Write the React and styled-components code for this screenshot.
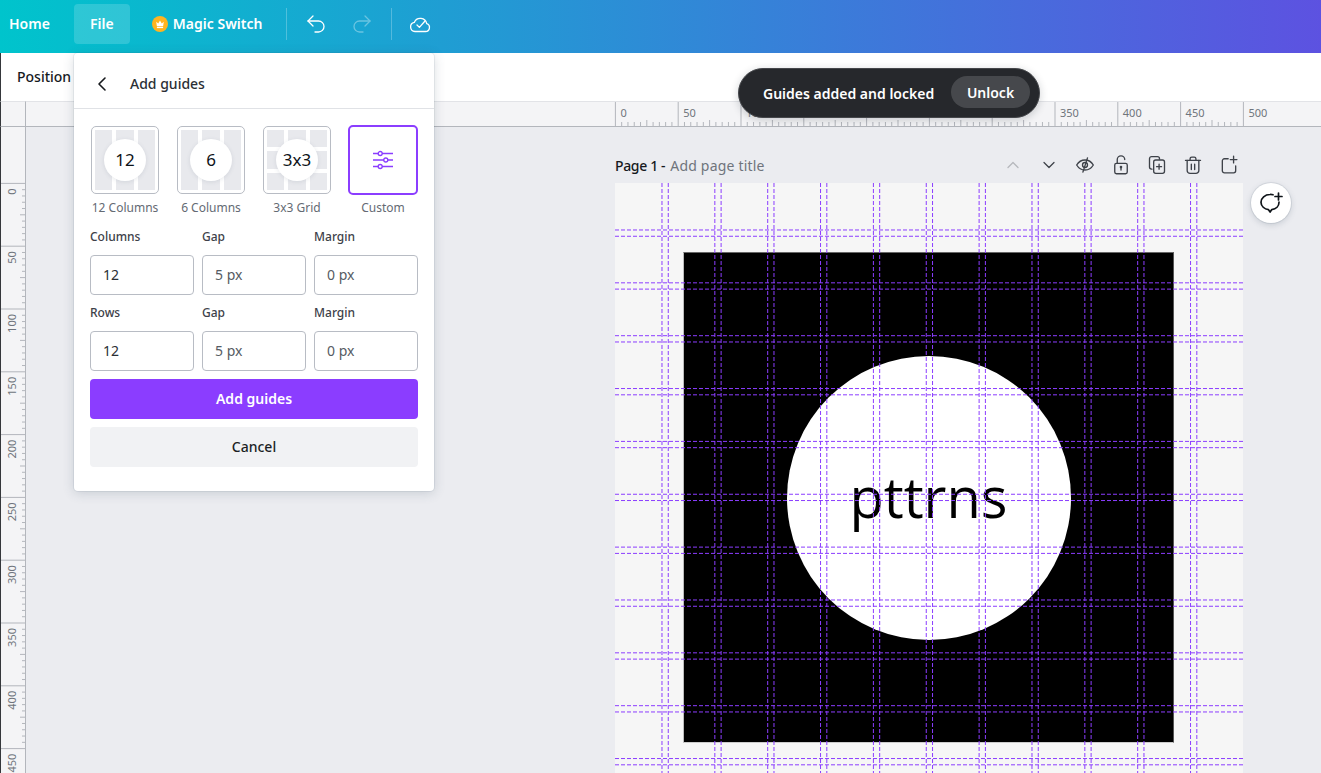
import React from "react";
import styled, { createGlobalStyle } from "styled-components";
import { Undo2, Redo2, ChevronLeft, ChevronUp, ChevronDown } from "lucide-react";

const SANS = `"Noto Sans", "Open Sans", sans-serif`;
const SCALE = 628 / 500;
const GAP = 5 * SCALE;
const COL = (628 - 11 * GAP) / 12;

const GlobalStyle = createGlobalStyle`
  html, body {
    margin: 0;
    height: 100%;
    overflow: hidden;
    font-family: ${SANS};
    background: #ebecf0;
  }
  * { box-sizing: border-box; }
`;

const Shell = styled.div`
  position: relative;
  width: 100%;
  height: 100vh;
  display: flex;
  flex-flow: column;
  overflow: hidden;
`;

const TopBar = styled.header`
  height: 53px;
  flex: none;
  display: flex;
  align-items: center;
  padding: 0 0 5px 9px;
  color: #fff;
  background: linear-gradient(90deg, #00c4cc 0, #7d2ae8 135%);
`;
const BarText = styled.span`
  padding-bottom: 1px;
  font-size: 14px;
  font-weight: 600;
`;
const FileButton = styled.div`
  width: 56px;
  height: 40px;
  margin: 0 22px 0 24px;
  padding-bottom: 1px;
  display: flex;
  justify-content: center;
  align-items: center;
  font-size: 14px;
  font-weight: 600;
  border-radius: 4px;
  background: rgba(255, 255, 255, 0.16);
`;
const Magic = styled.div`
  display: flex;
  align-items: center;
  gap: 5px;
`;
const BarDivider = styled.div`
  width: 1px;
  height: 32px;
  margin: ${(p) => p.$margin};
  background: rgba(255, 255, 255, 0.25);
`;
const BarIcon = styled.div`
  width: 24px;
  height: 24px;
  margin-right: ${(p) => p.$after || 0}px;
  display: flex;
  justify-content: center;
  align-items: center;
  opacity: ${(p) => (p.$dim ? 0.35 : 1)};
`;

const ContextBar = styled.div`
  height: 48px;
  flex: none;
  padding: 0 0 1px 16px;
  display: flex;
  align-items: center;
  border-left: 1px solid #35373b;
  background: #fff;
  font-size: 14px;
  font-weight: 500;
  color: #16191d;
`;

const Workspace = styled.div`
  flex: 1;
  min-height: 0;
  display: grid;
  grid-template-columns: 26px 1fr;
  grid-template-rows: 26px 1fr;
`;
const RulerCorner = styled.div`
  border-left: 1px solid #35373b;
  border-top: 1px solid #e2e3e7;
  border-right: 1px solid #b3b6bc;
  border-bottom: 1px solid #b3b6bc;
  background: #f4f4f6;
`;
const RulerTop = styled.div`
  padding-left: 589px;
  border-top: 1px solid #e2e3e7;
  border-bottom: 1px solid #b3b6bc;
  background: #f4f4f6;
  overflow: hidden;
`;
const RulerLeft = styled.div`
  padding-top: 56px;
  border-left: 1px solid #35373b;
  border-right: 1px solid #b3b6bc;
  background: #f4f4f6;
  overflow: hidden;
`;
const RulerSvg = styled.svg`
  display: block;
  overflow: visible;
`;
const RulerLabel = styled.text`
  font-family: ${SANS};
  font-size: 11px;
  fill: #6f747c;
`;

const Canvas = styled.main`
  padding: 22px 0 0 589px;
  overflow: hidden;
  background: #ebecf0;
`;
const PageColumn = styled.div`
  width: 628px;
`;
const PageHeader = styled.div`
  height: 34px;
  padding-bottom: 2px;
  display: flex;
  align-items: center;
  font-size: 14px;
  color: #16191d;
`;
const PageName = styled.span`
  font-weight: 500;
  letter-spacing: -0.35px;
`;
const PageHint = styled.span`
  margin-left: 5px;
  letter-spacing: 0.2px;
  color: #6f747c;
`;
const PageTools = styled.div`
  margin: 0 -4px 0 auto;
  display: flex;
`;
const PageTool = styled.div`
  width: 36px;
  height: 24px;
  display: flex;
  justify-content: center;
  align-items: center;
  color: #3e4249;
  opacity: ${(p) => (p.$dim ? 0.3 : 1)};
`;
const PageRow = styled.div`
  display: flex;
  gap: 8px;
  width: 676px;
`;
const Page = styled.section`
  position: relative;
  flex: none;
  width: 628px;
  height: 628px;
  display: flex;
  justify-content: center;
  align-items: center;
  background: #f6f6f6;
`;
const BlackSquare = styled.div`
  width: 491px;
  height: 491px;
  margin: 1px 1px 0 0;
  display: flex;
  justify-content: center;
  align-items: center;
  background: #000;
  border-style: solid;
  border-width: 1px;
  border-color: #666 #555 #ccc #bbb;
`;
const Disc = styled.div`
  width: 284px;
  height: 284px;
  padding-bottom: 3px;
  display: flex;
  justify-content: center;
  align-items: center;
  border-radius: 50%;
  background: #fff;
`;
const Logo = styled.div`
  font-family: "Open Sans", sans-serif;
  font-size: 56px;
  line-height: 1;
  color: #000;
`;
const GuideLayer = styled.svg`
  position: absolute;
  left: 0;
  top: 0;
  width: 628px;
  height: 628px;
  pointer-events: none;
`;
const CommentButton = styled.button`
  width: 40px;
  height: 40px;
  flex: none;
  padding: 0;
  display: flex;
  justify-content: center;
  align-items: center;
  border: 0;
  border-radius: 50%;
  background: #fff;
  box-shadow: 0 0 0 1px rgba(57, 76, 96, 0.1), 0 2px 6px rgba(57, 76, 96, 0.2);
`;

const Toast = styled.div`
  position: absolute;
  left: 738px;
  top: 68px;
  width: 302px;
  height: 50px;
  padding: 0 9px 0 24px;
  display: flex;
  justify-content: space-between;
  align-items: center;
  border: 1px solid #45474b;
  border-radius: 25px;
  background: #26282c;
  box-shadow: 0 2px 8px rgba(20, 30, 40, 0.2);
  color: #fff;
  font-size: 14px;
  font-weight: 600;
`;
const UnlockButton = styled.div`
  width: 79px;
  height: 32px;
  margin-top: -2px;
  display: flex;
  justify-content: center;
  align-items: center;
  border-radius: 16px;
  background: #46484c;
`;

const Panel = styled.aside`
  position: absolute;
  left: 74px;
  top: 53px;
  width: 360px;
  height: 438px;
  border-radius: 4px;
  background: #fff;
  box-shadow: 0 0 0 1px rgba(57, 76, 96, 0.08), 0 2px 12px rgba(57, 76, 96, 0.2);
`;
const PanelHeader = styled.div`
  height: 56px;
  padding: 6px 0 0 16px;
  display: flex;
  align-items: center;
  gap: 16px;
  border-bottom: 1px solid #e0e2e6;
  font-size: 14px;
  font-weight: 500;
  color: #2b2f35;
`;
const PanelBody = styled.div`
  padding: 16px 16px 0;
`;
const Presets = styled.div`
  display: grid;
  grid-template-columns: repeat(4, 70px);
  justify-content: space-between;
  margin-bottom: 10px;
`;
const Preset = styled.div`
  display: flex;
  flex-flow: column;
  align-items: center;
  gap: 4px;
`;
const Tile = styled.div`
  position: relative;
  width: ${(p) => (p.$active ? 70 : 68)}px;
  height: ${(p) => (p.$active ? 70 : 68)}px;
  margin-top: ${(p) => (p.$active ? 0 : 1)}px;
  margin-bottom: ${(p) => (p.$active ? 0 : 1)}px;
  padding: 3px;
  display: flex;
  justify-content: center;
  align-items: center;
  border: ${(p) => (p.$active ? "2px solid #8b3dff" : "1px solid #b8bcc4")};
  border-radius: 5px;
  background: #fff;
  color: #8b3dff;
`;
const TileGrid = styled.div`
  width: 100%;
  height: 100%;
  display: grid;
  grid-template-columns: repeat(3, 1fr);
  grid-template-rows: repeat(${(p) => p.$rows}, 1fr);
  gap: 4px;
`;
const TileCell = styled.div`
  background: #e8e9ed;
`;
const TileBadge = styled.div`
  position: absolute;
  left: 50%;
  top: 50%;
  width: 42px;
  height: 42px;
  padding-bottom: 1px;
  display: flex;
  justify-content: center;
  align-items: center;
  transform: translate(-50%, -50%);
  border-radius: 50%;
  background: #fff;
  box-shadow: 0 1px 4px rgba(57, 76, 96, 0.12);
  font-size: 17px;
  color: #0e1318;
`;
const PresetLabel = styled.div`
  font-size: 12px;
  line-height: 18px;
  color: #646a73;
`;
const FieldGrid = styled.div`
  display: grid;
  grid-template-columns: repeat(3, 104px);
  column-gap: 8px;
  margin-bottom: 8px;
`;
const FieldLabel = styled.div`
  height: 28px;
  font-size: 12px;
  font-weight: 500;
  line-height: 20px;
  color: #3d4149;
`;
const Field = styled.div`
  height: 40px;
  padding: 0 0 1px 12px;
  display: flex;
  align-items: center;
  border: 1px solid #b8bcc4;
  border-radius: 4px;
  background: #fff;
  font-size: 14px;
  color: ${(p) => (p.$unit ? "#565b63" : "#2b2f35")};
`;
const Action = styled.div`
  height: 40px;
  margin-bottom: 8px;
  padding-bottom: 1px;
  display: flex;
  justify-content: center;
  align-items: center;
  border-radius: 4px;
  font-size: 14px;
  font-weight: ${(p) => (p.$primary ? 600 : 500)};
  color: ${(p) => (p.$primary ? "#fff" : "#1c1f24")};
  background: ${(p) => (p.$primary ? "#8b3dff" : "#f1f2f4")};
`;

function Crown() {
  return (
    <svg width="16" height="16" viewBox="0 0 16 16">
      <circle cx="8" cy="8" r="8" fill="#ffb420" />
      <path d="M4.200 5.800l2 1.600L8 4.600l1.800 2.800 2-1.600-.7 4.400H4.900z" fill="#fff" />
      <rect x="4.900" y="10.900" width="6.200" height="1.200" fill="#fff" />
    </svg>
  );
}

function CloudCheck() {
  return (
    <svg width="24" height="24" viewBox="0 0 24 24" fill="none" stroke="#fff" strokeWidth="1.3" strokeLinecap="round" strokeLinejoin="round">
      <path d="M7 19.500h10.500a4 4 0 0 0 1.200-7.800 6.500 6.500 0 0 0-12.400-1.300A4.600 4.600 0 0 0 7 19.500z" />
      <path d="M9 13l2.400 2.400L17 9" />
    </svg>
  );
}

function Sliders() {
  return (
    <svg width="22" height="22" viewBox="0 0 22 22" fill="none" stroke="currentColor" strokeWidth="1.3">
      <path d="M1 4.500h5.500M10 4.500h11M1 11h11M15.500 11H21M1 17.500h5.500M10 17.500h11" />
      <circle cx="8.200" cy="4.500" r="2" />
      <circle cx="13.800" cy="11" r="2" />
      <circle cx="8.200" cy="17.500" r="2" />
    </svg>
  );
}

function Tool({ children }) {
  return (
    <svg width="20" height="20" viewBox="0 0 24 24" fill="none" stroke="currentColor" strokeWidth="1.6" strokeLinecap="round" strokeLinejoin="round">
      {children}
    </svg>
  );
}

const EyeOff = () => (
  <Tool>
    <path d="M2 12s3.600-6 10-6 10 6 10 6-3.600 6-10 6-10-6-10-6z" />
    <circle cx="12" cy="12" r="3" />
    <path d="M15 3.500L9.500 20.500" />
  </Tool>
);
const LockOpen = () => (
  <Tool>
    <rect x="4.500" y="10" width="15" height="12.500" rx="2" />
    <path d="M7.500 10V5.500a4.500 4.500 0 0 1 9 0" />
    <path d="M12 14.500v3.500" />
    <circle cx="12" cy="14.500" r=".8" />
  </Tool>
);
const CopyPlus = () => (
  <Tool>
    <path d="M15 5V4.500A2.500 2.500 0 0 0 12.500 2h-7A2.500 2.500 0 0 0 3 4.500v10A2.500 2.500 0 0 0 5.500 17H6" />
    <rect x="8" y="6" width="13" height="16" rx="2.500" />
    <path d="M14.500 11v6M11.500 14h6" />
  </Tool>
);
const Trash = () => (
  <Tool>
    <path d="M3 6.500h18" />
    <path d="M8.500 6.500V4.500A2 2 0 0 1 10.500 2.500h3a2 2 0 0 1 2 2v2" />
    <path d="M5 6.500v12A3.500 3.500 0 0 0 8.500 22h7a3.500 3.500 0 0 0 3.500-3.500v-12" />
    <path d="M10 11v6.500M14 11v6.500" />
  </Tool>
);
const AddPage = () => (
  <Tool>
    <path d="M11 4.500H6.500A2.500 2.500 0 0 0 4 7v12a2.500 2.500 0 0 0 2.500 2.500h11A2.500 2.500 0 0 0 20 19v-6" />
    <path d="M17.500 1.500v8M13.500 5.500h8" />
  </Tool>
);

function CommentPlus() {
  return (
    <svg width="24" height="24" viewBox="0 0 24 24" fill="none" stroke="#0e1318" strokeWidth="1.7" strokeLinecap="round" strokeLinejoin="round">
      <path d="M14 3.800A8.300 8.300 0 0 0 11 3.500C6 3.500 2 7 2 11.200c0 4 3.400 7 7.500 7.500l1.600 2.300 1.700-2.400c4.300-.6 7.200-3.700 7.200-7.400" />
      <path d="M19.500 2v7M16 5.500h7" />
    </svg>
  );
}

// rulers are just drawings, ticks every 5 units and labels every 50
function HorizontalRuler() {
  const marks = [];
  for (let i = 0; i <= 100; i++) {
    const x = 0.4 + i * 5 * SCALE;
    if (i % 10 === 0) {
      marks.push(<line key={i} x1={x} x2={x} y1="0" y2="24" stroke="#b3b6bc" />);
      marks.push(<RulerLabel key={"t" + i} x={x + 5} y="15">{i * 5}</RulerLabel>);
    } else {
      marks.push(<line key={i} x1={x} x2={x} y1={i % 5 === 0 ? 18 : 20} y2="24" stroke="#b3b6bc" />);
    }
  }
  return <RulerSvg width="628" height="24">{marks}</RulerSvg>;
}

function VerticalRuler() {
  const marks = [];
  for (let i = 0; i <= 90; i++) {
    const y = 0.4 + i * 5 * SCALE;
    if (i % 10 === 0) {
      marks.push(<line key={i} x1="0" x2="25" y1={y} y2={y} stroke="#b3b6bc" />);
      marks.push(
        <RulerLabel key={"t" + i} x="15" y={y + 5} textAnchor="end" transform={`rotate(-90 15 ${y + 5})`}>
          {i * 5}
        </RulerLabel>
      );
    } else {
      marks.push(<line key={i} x1={i % 5 === 0 ? 19 : 21} x2="25" y1={y} y2={y} stroke="#b3b6bc" />);
    }
  }
  return <RulerSvg width="24" height="600">{marks}</RulerSvg>;
}

function Guides() {
  const stops = [];
  for (let i = 1; i < 12; i++) {
    const at = 0.4 + i * COL + (i - 1) * GAP;
    stops.push(at, at + GAP);
  }
  return (
    <GuideLayer viewBox="0 0 628 628">
      {stops.map((at) => (
        <line key={"v" + at} x1={at} x2={at} y1="0" y2="628" stroke="#8b3dff" strokeDasharray="4 2" />
      ))}
      {stops.map((at) => (
        <line key={"h" + at} x1="0" x2="628" y1={at} y2={at} stroke="#8b3dff" strokeDasharray="4 2" />
      ))}
    </GuideLayer>
  );
}

const FIELDS = [
  { label: "Columns", value: "12" },
  { label: "Gap", value: "5 px", unit: true },
  { label: "Margin", value: "0 px", unit: true },
];
const ROWS = [
  { label: "Rows", value: "12" },
  { label: "Gap", value: "5 px", unit: true },
  { label: "Margin", value: "0 px", unit: true },
];
const PRESETS = [
  { badge: "12", label: "12 Columns", rows: 1 },
  { badge: "6", label: "6 Columns", rows: 1 },
  { badge: "3x3", label: "3x3 Grid", rows: 3 },
];

function FieldRow({ fields }) {
  return (
    <FieldGrid>
      {fields.map((f) => (
        <div key={f.label}>
          <FieldLabel>{f.label}</FieldLabel>
          <Field $unit={f.unit}>{f.value}</Field>
        </div>
      ))}
    </FieldGrid>
  );
}

export default function App() {
  return (
    <Shell>
      <GlobalStyle />
      <TopBar>
        <BarText>Home</BarText>
        <FileButton>File</FileButton>
        <Magic>
          <Crown />
          <BarText>Magic Switch</BarText>
        </Magic>
        <BarDivider $margin="0 17px 0 24px" />
        <BarIcon $after={22}><Undo2 size={24} strokeWidth={1.3} /></BarIcon>
        <BarIcon $dim><Redo2 size={24} strokeWidth={1.3} /></BarIcon>
        <BarDivider $margin="0 16px 0 17px" />
        <BarIcon><CloudCheck /></BarIcon>
      </TopBar>
      <ContextBar>Position</ContextBar>
      <Workspace>
        <RulerCorner />
        <RulerTop><HorizontalRuler /></RulerTop>
        <RulerLeft><VerticalRuler /></RulerLeft>
        <Canvas>
          <PageColumn>
            <PageHeader>
              <PageName>Page 1 -</PageName>
              <PageHint>Add page title</PageHint>
              <PageTools>
                <PageTool $dim><ChevronUp size={20} strokeWidth={1.5} /></PageTool>
                <PageTool><ChevronDown size={20} strokeWidth={1.5} /></PageTool>
                <PageTool><EyeOff /></PageTool>
                <PageTool><LockOpen /></PageTool>
                <PageTool><CopyPlus /></PageTool>
                <PageTool><Trash /></PageTool>
                <PageTool><AddPage /></PageTool>
              </PageTools>
            </PageHeader>
          </PageColumn>
          <PageRow>
            <Page>
              <BlackSquare>
                <Disc>
                  <Logo>pttrns</Logo>
                </Disc>
              </BlackSquare>
              <Guides />
            </Page>
            <CommentButton><CommentPlus /></CommentButton>
          </PageRow>
        </Canvas>
      </Workspace>

      <Toast>
        Guides added and locked
        <UnlockButton>Unlock</UnlockButton>
      </Toast>

      <Panel>
        <PanelHeader>
          <ChevronLeft size={24} strokeWidth={1.6} color="#16191d" />
          Add guides
        </PanelHeader>
        <PanelBody>
          <Presets>
            {PRESETS.map((p) => (
              <Preset key={p.label}>
                <Tile>
                  <TileGrid $rows={p.rows}>
                    {Array.from({ length: 3 * p.rows }, (_, i) => <TileCell key={i} />)}
                  </TileGrid>
                  <TileBadge>{p.badge}</TileBadge>
                </Tile>
                <PresetLabel>{p.label}</PresetLabel>
              </Preset>
            ))}
            <Preset>
              <Tile $active><Sliders /></Tile>
              <PresetLabel>Custom</PresetLabel>
            </Preset>
          </Presets>
          <FieldRow fields={FIELDS} />
          <FieldRow fields={ROWS} />
          <Action $primary>Add guides</Action>
          <Action>Cancel</Action>
        </PanelBody>
      </Panel>
    </Shell>
  );
}
